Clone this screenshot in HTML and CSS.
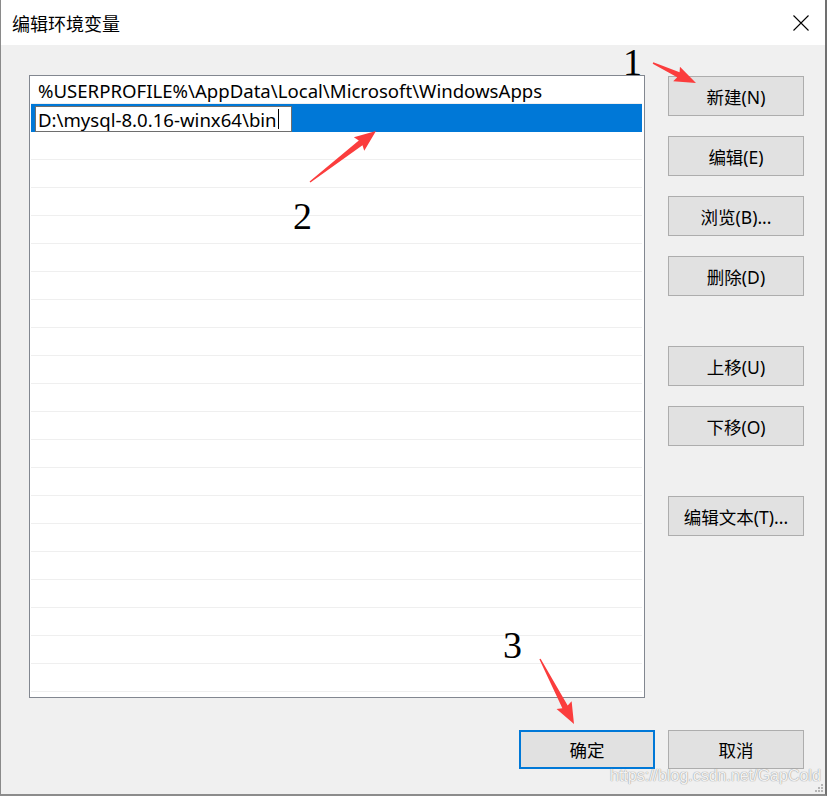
FILE: index.html
```html
<!DOCTYPE html>
<html lang="zh-CN">
<head>
<meta charset="utf-8">
<title>编辑环境变量</title>
<link rel="stylesheet" href="styles.css">
</head>
<body>
<div class="window">
  <div class="titlebar">
    <span class="title">编辑环境变量</span>
    <svg class="close" width="16" height="16" viewBox="0 0 16 16"><path d="M0.5 0.5 L15.5 15.5 M15.5 0.5 L0.5 15.5" stroke="#000" stroke-width="1.1" fill="none"/></svg>
  </div>
  <div class="content">
    <div class="main">
      <div class="list">
        <div class="row">%USERPROFILE%\AppData\Local\Microsoft\WindowsApps</div>
        <div class="row selected"><div class="editbox">D:\mysql-8.0.16-winx64\bin<span class="caret"></span></div></div>
        <div class="row"></div><div class="row"></div><div class="row"></div><div class="row"></div>
        <div class="row"></div><div class="row"></div><div class="row"></div><div class="row"></div>
        <div class="row"></div><div class="row"></div><div class="row"></div><div class="row"></div>
        <div class="row"></div><div class="row"></div><div class="row"></div><div class="row"></div>
        <div class="row"></div><div class="row"></div><div class="row"></div><div class="row"></div>
      </div>
      <div class="side">
        <div class="btn">新建(N)</div>
        <div class="btn">编辑(E)</div>
        <div class="btn">浏览(B)...</div>
        <div class="btn">删除(D)</div>
        <div class="btn spaced">上移(U)</div>
        <div class="btn">下移(O)</div>
        <div class="btn spaced">编辑文本(T)...</div>
      </div>
    </div>
    <div class="bottom">
      <div class="btn default">确定</div>
      <div class="btn">取消</div>
    </div>
  </div>
</div>

<svg class="arrows" width="827" height="796" viewBox="0 0 827 796">
  <g fill="#fb3d3d">
    <g transform="translate(653 63) rotate(24.9)"><polygon points="0,-0.7 28,-2.8 26,-8 47.4,0 26,8 28,2.8 0,0.7"/></g>
    <g transform="translate(310 182) rotate(-37.7)"><polygon points="0,-0.7 64,-3 62,-8.5 83.4,0 62,8.5 64,3 0,0.7"/></g>
    <g transform="translate(540 659) rotate(62.4)"><polygon points="0,-0.7 54,-3 52,-8.5 73.4,0 52,8.5 54,3 0,0.7"/></g>
  </g>
</svg>
<span class="num n1">1</span>
<span class="num n2">2</span>
<span class="num n3">3</span>
<span class="watermark">https://blog.csdn.net/GapCold</span>
<svg class="grip" width="9" height="9" viewBox="0 0 9 9">
  <g fill="#b5b5b5"><rect x="6" y="0" width="2" height="2"/><rect x="3" y="3" width="2" height="2"/><rect x="6" y="3" width="2" height="2"/><rect x="0" y="6" width="2" height="2"/><rect x="3" y="6" width="2" height="2"/><rect x="6" y="6" width="2" height="2"/></g>
</svg>
</body>
</html>
```
FILE: styles.css
```css
html, body {
  margin: 0;
  padding: 0;
}
body {
  width: 827px;
  height: 796px;
  position: relative;
  overflow: hidden;
  background: #f0f0f0;
  font-family: "Noto Sans", "Noto Sans CJK SC", sans-serif;
  font-size: 17.5px;
  color: #000;
}
.window {
  width: 827px;
  height: 796px;
  box-sizing: border-box;
  border-left: 1px solid #8a8a8a;
  border-right: 2px solid #707070;
  border-bottom: 2px solid #8c8c8c;
  display: flex;
  flex-direction: column;
  background: #f0f0f0;
}
.titlebar {
  height: 45px;
  flex: none;
  background: #fff;
  display: flex;
  align-items: center;
  justify-content: space-between;
  padding-left: 11px;
  padding-right: 16px;
}
.title {
  font-family: "Noto Sans CJK SC", sans-serif;
  font-size: 18px;
}
.close {
  display: block;
}
.content {
  flex: 1;
  display: flex;
  flex-direction: column;
  padding: 30px 0 0 28px;
}
.main {
  display: flex;
}
.list {
  width: 616px;
  height: 623px;
  box-sizing: border-box;
  border: 1px solid #828790;
  background: #fff;
  overflow: hidden;
  padding: 0 2px 0 1px;
  font-size: 18.6px;
}
.row {
  height: 28px;
  box-sizing: border-box;
  border-bottom: 1px solid #efefef;
  display: flex;
  align-items: center;
  padding-left: 7px;
  padding-top: 1px;
  white-space: nowrap;
}
.row.selected {
  background: #0078d7;
  border-bottom-color: #0078d7;
  padding-left: 4px;
  padding-top: 0;
  align-items: flex-end;
}
.editbox {
  width: 257px;
  height: 26px;
  box-sizing: border-box;
  background: #fff;
  border: 1px solid #6e6e6e;
  padding-left: 2px;
  display: flex;
  align-items: center;
  margin-bottom: -1px;
  overflow: hidden;
}
.caret {
  display: inline-block;
  width: 1px;
  height: 20px;
  background: #000;
  margin-left: 1px;
}
.side {
  margin-left: 23px;
  padding-top: 1px;
  display: flex;
  flex-direction: column;
  gap: 20px;
}
.btn {
  width: 136px;
  height: 40px;
  box-sizing: border-box;
  background: #e1e1e1;
  border: 1px solid #adadad;
  display: flex;
  align-items: center;
  justify-content: center;
  white-space: nowrap;
}
.btn.spaced {
  margin-top: 30px;
}
.bottom {
  display: flex;
  justify-content: flex-end;
  gap: 13px;
  margin-top: 32px;
  padding-right: 21px;
}
.bottom .btn {
  height: 39px;
}
.btn.default {
  border: 2px solid #0078d7;
}
.arrows {
  position: absolute;
  left: 0;
  top: 0;
  pointer-events: none;
}
.num {
  position: absolute;
  font-family: "Liberation Serif", serif;
  font-size: 38px;
  line-height: 38px;
  color: #000;
}
.n1 { left: 623px; top: 43px; }
.n2 { left: 293px; top: 197px; }
.n3 { left: 503px; top: 626px; }
.watermark {
  position: absolute;
  left: 610px;
  top: 767px;
  font-family: "Liberation Sans", sans-serif;
  font-size: 16px;
  color: rgba(255, 255, 255, 0.9);
  text-shadow: 0 0 1px #9a9a9a, 0 0 1px #9a9a9a;
  white-space: nowrap;
}
.grip {
  position: absolute;
  right: 3px;
  bottom: 3px;
}
```
